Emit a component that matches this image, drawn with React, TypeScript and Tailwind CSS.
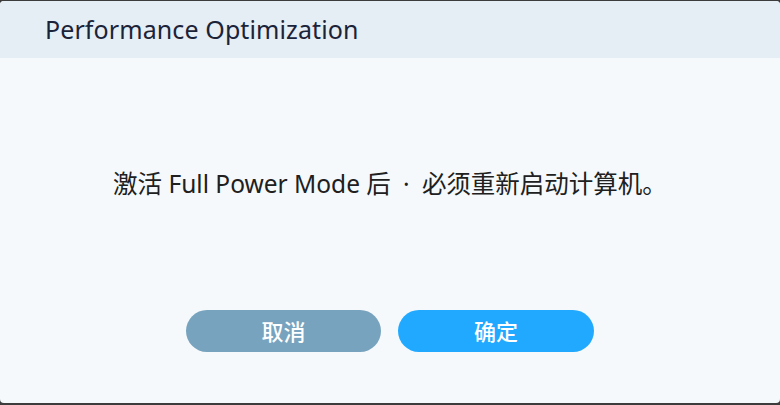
export default function App() {
  return (
    <div className="w-[780px] h-[405px] bg-[#3c3c3c] pt-px pb-[2px] font-['Noto_Sans','Noto_Sans_CJK_SC',sans-serif]">
      <div className="h-full rounded-[4px] bg-[#f5f9fc] flex flex-col overflow-hidden">
        <div className="h-[57px] bg-[#e5edf5] flex items-center pl-[45px] shrink-0">
          <span className="text-[25px] text-[#1b2338] tracking-[0.1px]">Performance Optimization</span>
        </div>
        <div className="flex-1 flex items-center justify-center">
          <p className="text-[24.5px] text-[#202020]">
            激活 Full Power Mode 后<span className="inline-block w-[31px] text-center">·</span>必须重新启动计算机。
          </p>
        </div>
        <div className="flex justify-center gap-[17px] pb-[51px]">
          <button className="w-[195px] h-[42px] rounded-full bg-[#77a3be] text-white text-[22px] font-medium">取消</button>
          <button className="w-[196px] h-[42px] rounded-full bg-[#20a9ff] text-white text-[22px] font-medium">确定</button>
        </div>
      </div>
    </div>
  );
}
